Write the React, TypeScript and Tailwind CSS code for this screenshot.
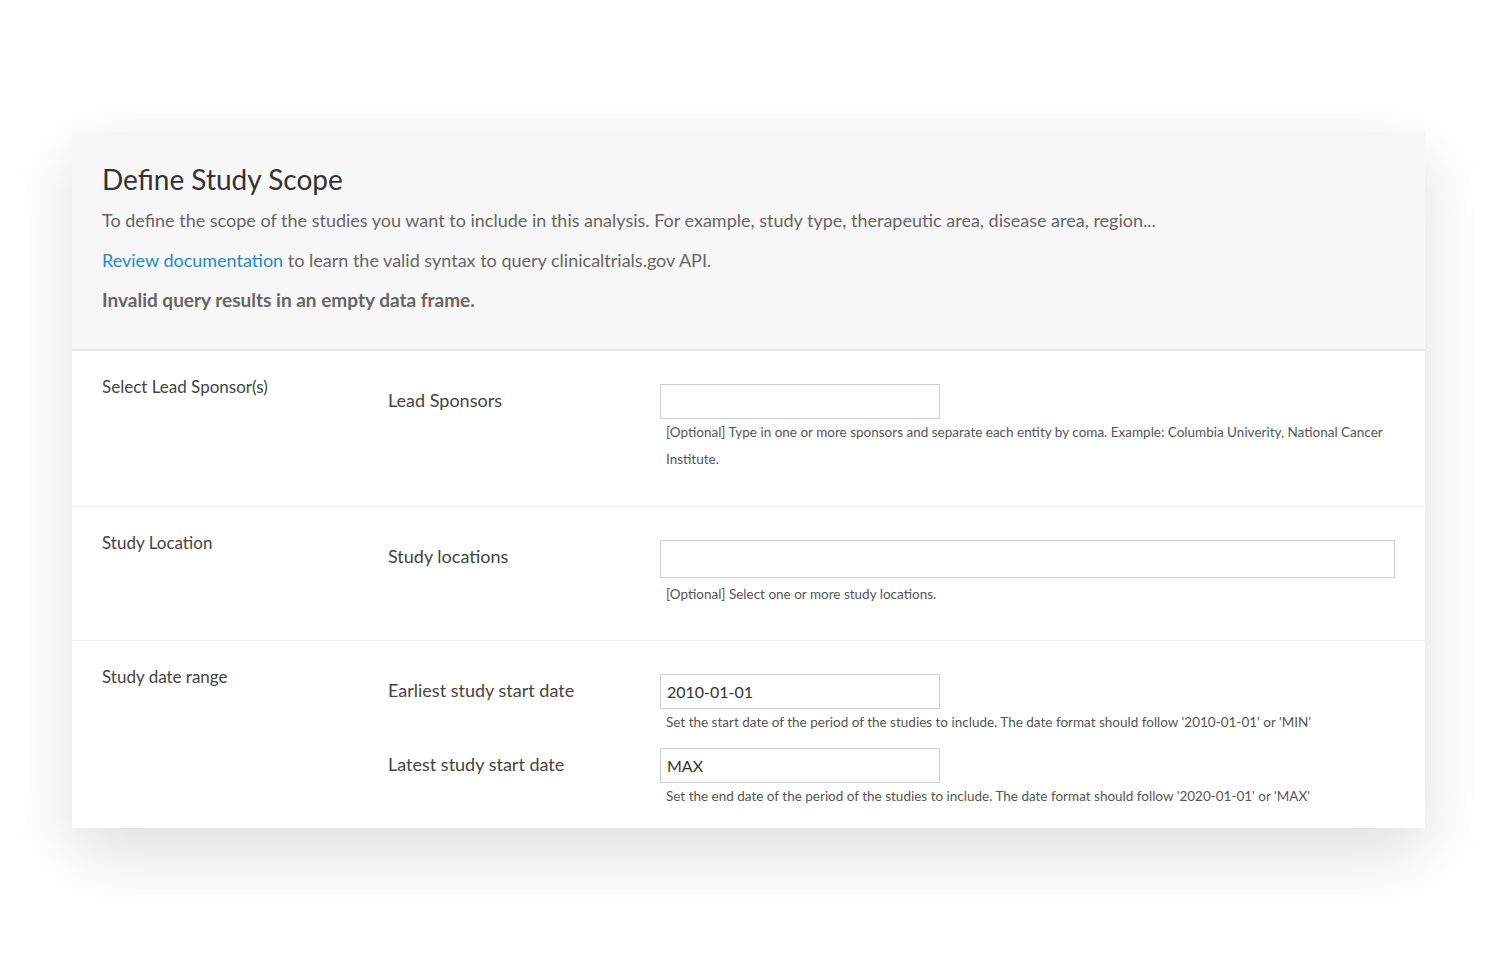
import React from 'react';

const font = { fontFamily: 'Lato, "Liberation Sans", sans-serif' };

const Help: React.FC<{ children: React.ReactNode }> = ({ children }) => (
  <p className="pl-[6px] text-[13.5px] leading-[27px] text-[#555]">{children}</p>
);

const Field: React.FC<{
  label: string;
  value?: string;
  wide?: boolean;
  help: React.ReactNode;
  className?: string;
}> = ({ label, value = '', wide, help, className = '' }) => (
  <div className={`grid grid-cols-[272px_1fr] ${className}`}>
    <div className="pt-[13px] text-[18px] leading-6 text-[#444]">{label}</div>
    <div className="pt-[9px]">
      <input
        readOnly
        value={value}
        className={`block border border-[#cfcfcf] bg-white px-[6px] text-[16px] text-[#333] outline-none ${
          wide ? 'h-[38px] w-full' : 'h-[35px] w-[280px]'
        }`}
      />
      <div className={wide ? 'mt-[3px]' : ''}>{help}</div>
    </div>
  </div>
);

const Row: React.FC<{ title: string; children: React.ReactNode; className?: string }> = ({
  title,
  children,
  className = '',
}) => (
  <div className={`grid grid-cols-[286px_1fr] px-[30px] pt-[24px] ${className}`}>
    <div className="text-[17px] leading-6 text-[#444]">{title}</div>
    <div>{children}</div>
  </div>
);

export default function App() {
  return (
    <div className="min-h-screen bg-white px-[72px] pt-[132px]" style={font}>
      <div className="bg-white shadow-[0_24px_60px_rgba(0,0,0,0.13)]">
        <div className="border-b-2 border-[#e6e6e6] bg-[#f7f7f7] px-[30px] pt-[29px] pb-[35px]">
          <h1 className="text-[28px] leading-9 text-[#333]">Define Study Scope</h1>
          <p className="mt-[9px] text-[18px] leading-7 text-[#666]">
            To define the scope of the studies you want to include in this analysis. For example, study type,
            therapeutic area, disease area, region...
          </p>
          <p className="mt-3 text-[18px] leading-7 text-[#666]">
            <a className="text-[#1a8ad4]">Review documentation</a> to learn the valid syntax to query
            clinicaltrials.gov API.
          </p>
          <p className="mt-3 text-[19px] font-bold leading-7 text-[#666]">
            Invalid query results in an empty data frame.
          </p>
        </div>

        <Row title="Select Lead Sponsor(s)" className="border-b border-[#f0f0f0] pb-[33px]">
          <Field
            label="Lead Sponsors"
            help={
              <Help>
                [Optional] Type in one or more sponsors and separate each entity by coma. Example: Columbia
                Univerity, National Cancer Institute.
              </Help>
            }
          />
        </Row>

        <Row title="Study Location" className="border-b border-[#f0f0f0] pb-[32px]">
          <Field
            label="Study locations"
            wide
            help={<Help>[Optional] Select one or more study locations.</Help>}
          />
        </Row>

        <Row title="Study date range" className="pb-[18px]">
          <Field
            label="Earliest study start date"
            value="2010-01-01"
            help={
              <Help>
                Set the start date of the period of the studies to include. The date format should follow
                '2010-01-01' or 'MIN'
              </Help>
            }
          />
          <Field
            label="Latest study start date"
            value="MAX"
            className="mt-[3px]"
            help={
              <Help>
                Set the end date of the period of the studies to include. The date format should follow
                '2020-01-01' or 'MAX'
              </Help>
            }
          />
        </Row>
      </div>
    </div>
  );
}
